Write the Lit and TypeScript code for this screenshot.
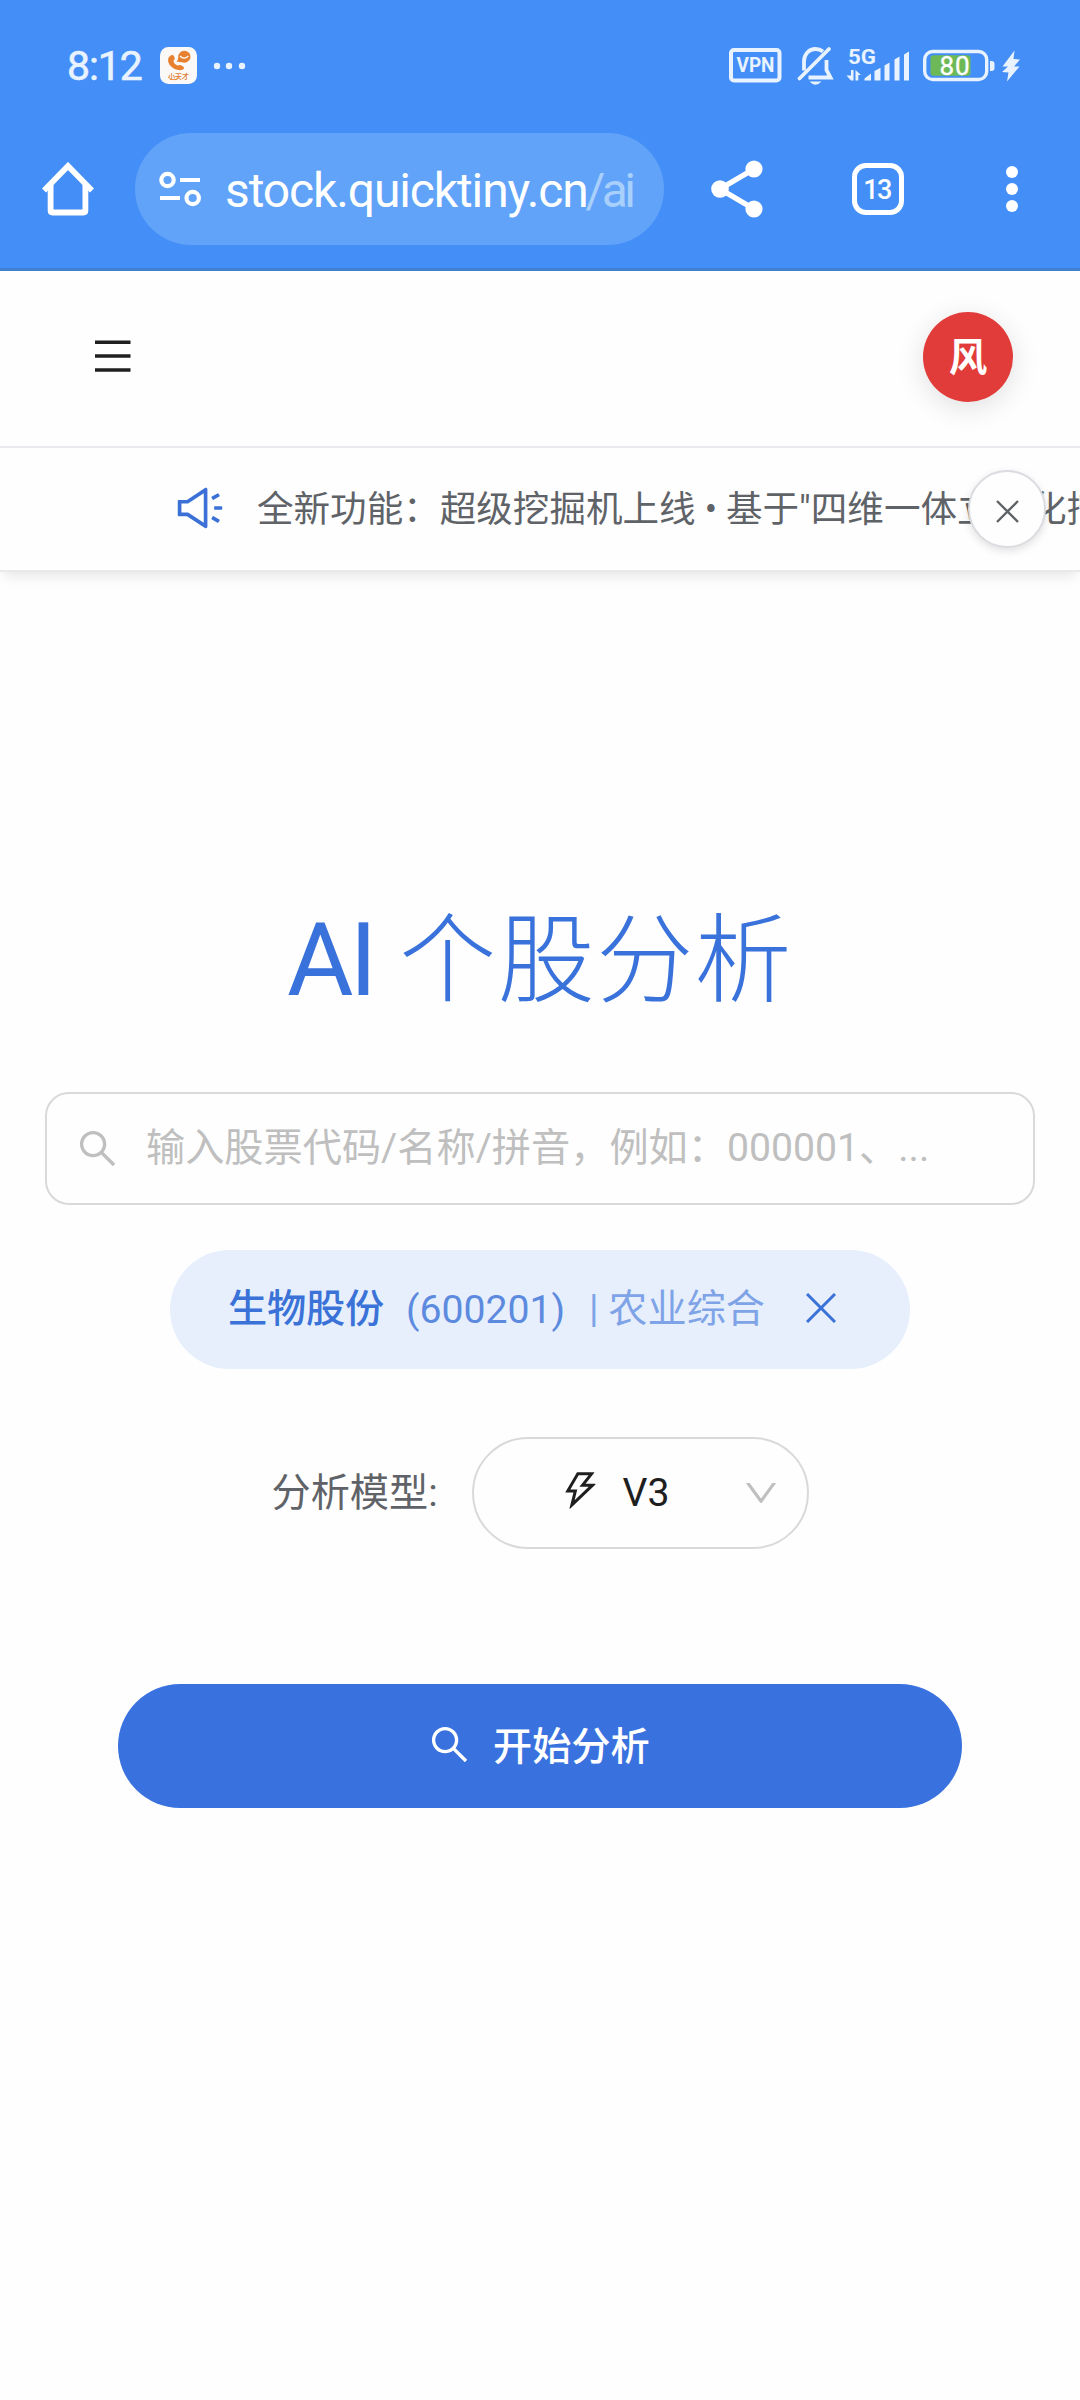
import { LitElement, html, css } from "lit";
import { customElement } from "lit/decorators.js";

const SEARCH =
  "M909.6 854.5L649.9 594.8C690.2 542.7 712 479 712 412c0-80.2-31.3-155.4-87.9-212.1-56.6-56.7-132-87.9-212.1-87.9s-155.5 31.3-212.1 87.9C143.2 256.5 112 331.8 112 412c0 80.1 31.3 155.5 87.9 212.1C256.5 680.8 331.8 712 412 712c67 0 130.6-21.8 182.7-62l259.7 259.6a8.2 8.2 0 0 0 11.6 0l43.6-43.5a8.2 8.2 0 0 0 0-11.6zM570.4 570.4C528 612.7 471.8 636 412 636s-116-23.3-158.4-65.6C211.3 528 188 471.8 188 412s23.3-116.1 65.6-158.4C296 211.3 352.2 188 412 188s116.1 23.2 158.4 65.6S636 352.2 636 412s-23.3 116.1-65.6 158.4z";
const SOUND =
  "M625.9 115c-5.9 0-11.9 1.6-17.4 5.3L254 352H90c-8.8 0-16 7.2-16 16v288c0 8.8 7.2 16 16 16h164l354.5 231.7c5.5 3.6 11.6 5.3 17.4 5.3 16.7 0 32.1-13.3 32.1-32.1V147.1c0-18.8-15.4-32.1-32.1-32.1zM586 803L293.4 611.7l-18-11.7H146V424h129.4l17.9-11.7L586 221v582zm348-327H806c-8.8 0-16 7.2-16 16v40c0 8.8 7.2 16 16 16h128c8.8 0 16-7.2 16-16v-40c0-8.8-7.2-16-16-16zm-41.9 261.8l-110.3-63.7a15.9 15.9 0 0 0-21.7 5.9l-19.9 34.5c-4.4 7.6-1.8 17.4 5.8 21.8L856.3 800a15.9 15.9 0 0 0 21.7-5.9l19.9-34.5c4.4-7.6 1.7-17.4-5.8-21.8zM760 344a15.9 15.9 0 0 0 21.7 5.9L892 286.2c7.6-4.4 10.2-14.2 5.8-21.8L878 230a15.9 15.9 0 0 0-21.7-5.9L746 287.8a15.99 15.99 0 0 0-5.8 21.8L760 344z";
const BOLT =
  "M848 359.3H627.7L825.8 109c4.1-5.3.4-13-6.3-13H436c-2.8 0-5.5 1.5-6.9 4L170 547.5c-3.1 5.3.7 12 6.9 12h174.4l-89.4 357.6c-1.9 7.8 7.5 13.3 13.3 7.7L853.5 373c5.2-4.9 1.7-13.7-5.5-13.7zM378.2 732.5l60.3-241H281.1l189.6-327.4h224.6L487 427.4h211L378.2 732.5z";
const DOWN =
  "M884 256h-75c-5.1 0-9.9 2.5-12.9 6.6L512 654.2 227.9 262.6c-3-4.1-7.8-6.6-12.9-6.6h-75c-6.5 0-10.3 7.4-6.5 12.7l352.6 486.1c12.8 17.6 39 17.6 51.7 0l352.6-486.1c3.9-5.3.1-12.7-6.4-12.7z";

const glyph = (d: string, size: number) => html`<svg
  width=${size}
  height=${size}
  viewBox="0 0 1024 1024"
  fill="currentColor"
>
  <path d=${d}></path>
</svg>`;

const cross = (size: number, stroke: number) => html`<svg
  width=${size}
  height=${size}
  viewBox="0 0 ${size} ${size}"
  fill="none"
  stroke="currentColor"
  stroke-width=${stroke}
>
  <path d="M1 1L${size - 1} ${size - 1}M${size - 1} 1L1 ${size - 1}"></path>
</svg>`;

@customElement("status-bar")
class StatusBar extends LitElement {
  static styles = css`
    :host {
      display: flex;
      align-items: center;
      height: 110px;
      box-sizing: border-box;
      padding: 22px 60px 0 67px;
      color: #e9f3ff;
      font-family: Roboto, "Noto Sans CJK SC", sans-serif;
    }
    svg {
      display: block;
      flex: none;
      overflow: visible;
    }
    .time {
      width: 93px;
      font-size: 41px;
      line-height: 44px;
      font-weight: 400;
      letter-spacing: -1.1px;
      -webkit-text-stroke: 0.6px #e9f3ff;
      white-space: nowrap;
    }
    .more {
      margin-left: 16px;
    }
    .right {
      margin-left: auto;
      display: flex;
      align-items: center;
    }
    .bell {
      margin-left: 15px;
    }
    .signal {
      margin-left: 12px;
    }
    .battery {
      margin-left: 13px;
    }
    .charge {
      margin-left: 7px;
    }
  `;
  render() {
    return html`
      <span class="time">8:12</span>
      <svg width="37" height="38" viewBox="0 0 37 38">
        <rect width="37" height="37" rx="8.5" fill="#fbf9f7"></rect>
        <path
          d="M11.2 8.200c-4.400 2-3.600 7.300-.8 10.600 3 3.600 8.200 5.400 12.600 3.800 1.300-.6 1.100-2.300.2-3.100l-2.300-1.300c-1.300-.6-2.200.5-3.200.4-2.200-.5-4-2.500-4.200-4.500 0-1.200 1.500-1.500 1.300-2.900l-.9-2.200c-.5-1-1.600-1.300-2.700-.8z"
          fill="#e8812f"
        ></path>
        <path d="M16.500 14.500q1.700-1.500 1.700-4a6.200 6 0 1 1 3.800 4.800q-2.500 0-5.500-.8z" fill="#e8812f"></path>
        <path d="M20 9q4 4.200 8.400 0" stroke="#fff" stroke-width="1.100" fill="none"></path>
        <text x="8" y="31.500" font-size="7.300" font-weight="500" textLength="21" fill="#e07a32">小天才</text>
        <path d="M8.500 30q3.500 4.500 10 1.500" stroke="#e8812f" stroke-width=".9" fill="none"></path>
      </svg>
      <svg class="more" width="34" height="8" viewBox="0 0 34 8" fill="currentColor">
        <circle cx="4" cy="4" r="3.200"></circle><circle cx="16" cy="4" r="3.200"></circle><circle cx="29" cy="4" r="3.200"></circle>
      </svg>
      <div class="right">
        <svg width="53" height="36" viewBox="0 0 53 36">
          <rect x="2" y="2" width="48.500" height="30.500" rx="3" fill="none" stroke="currentColor" stroke-width="4"></rect>
          <text x="7.500" y="24.300" font-size="19.500" font-weight="700" textLength="38" lengthAdjust="spacingAndGlyphs" fill="currentColor">VPN</text>
        </svg>
        <svg class="bell" width="37" height="40" viewBox="0 0 37 40" fill="none" stroke="currentColor" stroke-width="3.800">
          <path d="M2.500 32.500L32 3" stroke-linecap="round"></path>
          <path d="M7 24.500V15.500C7 8 12 3 18.500 3C21.500 3 24 4 26 5.600"></path>
          <path d="M29.500 14V24L33.500 31.500H11.500"></path>
          <path d="M12.500 35.500q6 6.500 12 0z" fill="currentColor" stroke="none"></path>
        </svg>
        <svg class="signal" width="64" height="38" viewBox="0 0 64 38" fill="currentColor">
          <text x="2" y="16.500" font-size="21" font-weight="700" textLength="28" lengthAdjust="spacingAndGlyphs">5G</text>
          <path d="M5 23h2.500v10.500H5L.5 28.500H5zM9.500 33.500V23l5.500 5h-2.700v5.500z"></path>
          <path d="M18.500 33.500v-2l6.500-5v7zM28.500 33.500V24l6-3.200V33.500zM38.500 33.500V18.500l5-3V33.500zM48.500 33.500V12.500l5-3V33.500zM58 33.500V7.500l5-3V33.500z"></path>
        </svg>
        <svg class="battery" width="72" height="34" viewBox="0 0 72 34">
          <rect x="1.700" y="2.500" width="62" height="28" rx="8" fill="none" stroke="currentColor" stroke-width="3.400"></rect>
          <rect x="7.500" y="6.300" width="40" height="20.500" rx="3" fill="#6db957"></rect>
          <path d="M67 12h1.500q3 0 3 3v4q0 3-3 3H67z" fill="currentColor"></path>
          <text x="16.500" y="26.200" font-size="26" font-weight="400" textLength="30" fill="#fff" stroke="#fff" stroke-width=".4">80</text>
        </svg>
        <svg class="charge" width="18" height="32" viewBox="0 0 18 32" fill="currentColor">
          <path d="M12.500 0.500L.5 16.500H6L0 22l6.500.5L5 31.500L17.500 16.500H12L18 9.500L11.500 9z"></path>
        </svg>
      </div>
    `;
  }
}

@customElement("browser-bar")
class BrowserBar extends LitElement {
  static styles = css`
    :host {
      display: flex;
      align-items: center;
      height: 161px;
      box-sizing: border-box;
      padding: 0 62px 0 42px;
      border-bottom: 3px solid #417fcf;
      color: #fff;
      font-family: Roboto, sans-serif;
    }
    svg {
      display: block;
      flex: none;
    }
    .url {
      display: flex;
      align-items: center;
      width: 529px;
      height: 112px;
      box-sizing: border-box;
      margin-left: 41px;
      padding-left: 24px;
      border-radius: 56px;
      background: #60a3f8;
    }
    .address {
      margin-left: 23px;
      padding-top: 3px;
      font-size: 48px;
      line-height: 56px;
      letter-spacing: -1.12px;
      white-space: nowrap;
    }
    .path {
      margin-left: -2px;
      color: #a9cffc;
      letter-spacing: -3.6px;
    }
    .share {
      margin-left: 47px;
    }
    .tabs {
      margin-left: 89px;
      display: flex;
      align-items: center;
      justify-content: center;
      width: 52px;
      height: 52px;
      box-sizing: border-box;
      padding: 2px 2px 0 0;
      border: 5.5px solid #fff;
      border-radius: 14px;
      font-size: 27px;
      font-weight: 500;
      letter-spacing: -1.6px;
    }
    .menu {
      margin-left: auto;
    }
  `;
  render() {
    return html`
      <svg width="52" height="54" viewBox="0 0 52 54" fill="none" stroke="currentColor" stroke-width="5.800">
        <path d="M2 28.500L26 4L50 28.500"></path>
        <path d="M8.600 22V48.500q0 2 2 2H41.400q2 0 2-2V22"></path>
      </svg>
      <div class="url">
        <svg width="43" height="38" viewBox="0 0 43 38" fill="none" stroke="currentColor" stroke-width="4.200">
          <circle cx="8.500" cy="10" r="6.200"></circle>
          <path d="M21 10H41M1 28H21"></path>
          <circle cx="33.700" cy="28" r="6.200"></circle>
        </svg>
        <span class="address">stock.quicktiny.cn<span class="path">/ai</span></span>
      </div>
      <svg class="share" width="52" height="58" viewBox="0 0 52 58" fill="currentColor">
        <path d="M43 9L9 29L43 49" fill="none" stroke="currentColor" stroke-width="5.500"></path>
        <circle cx="9" cy="29" r="8.800"></circle><circle cx="43" cy="9" r="8.600"></circle><circle cx="43" cy="49" r="8.600"></circle>
      </svg>
      <div class="tabs">13</div>
      <svg class="menu" width="12" height="46" viewBox="0 0 12 46" fill="currentColor">
        <circle cx="6" cy="6" r="6"></circle><circle cx="6" cy="23" r="6"></circle><circle cx="6" cy="40" r="6"></circle>
      </svg>
    `;
  }
}

@customElement("app-root")
class AppRoot extends LitElement {
  static styles = css`
    :host {
      display: block;
      width: 1080px;
      height: 2400px;
      overflow: hidden;
      background: #fefefe;
      color: #5f6368;
      font-family: Roboto, "Noto Sans CJK SC", sans-serif;
      font-size: 39.2px;
    }
    svg {
      display: block;
      flex: none;
    }
    .chrome {
      background: #448ef7;
    }
    .header {
      display: flex;
      align-items: center;
      justify-content: space-between;
      height: 177px;
      box-sizing: border-box;
      padding: 0 67px 4px 95px;
      border-bottom: 2px solid #e8eaed;
    }
    .burger {
      margin-bottom: 2px;
    }
    .avatar {
      display: flex;
      align-items: center;
      justify-content: center;
      width: 90px;
      height: 90px;
      box-sizing: border-box;
      padding-top: 2px;
      border-radius: 50%;
      background: #e13c39;
      box-shadow: 0 6px 28px rgba(0, 0, 0, 0.12);
      color: #fff;
      font-size: 38.5px;
      font-weight: 700;
      line-height: 44px;
    }
    .notice {
      position: relative;
      display: flex;
      align-items: center;
      height: 124px;
      box-sizing: border-box;
      padding-left: 174px;
      border-bottom: 2px solid #e9e9e9;
      box-shadow: 0 8px 12px -4px rgba(0, 0, 0, 0.1);
    }
    .sound {
      color: #3b71d6;
      margin-bottom: 2px;
    }
    .ticker {
      flex: 1;
      min-width: 0;
      margin-left: 31px;
      padding-top: 1px;
      overflow: hidden;
      white-space: nowrap;
      font-size: 36.55px;
      line-height: 52px;
    }
    .dismiss {
      position: absolute;
      left: 968px;
      top: 22px;
      display: flex;
      align-items: center;
      justify-content: center;
      width: 78px;
      height: 78px;
      box-sizing: border-box;
      padding-top: 5px;
      border: 2px solid #dadce0;
      border-radius: 50%;
      background: #fefefe;
      box-shadow: 0 3px 8px rgba(0, 0, 0, 0.12);
    }
    .main {
      display: flex;
      flex-direction: column;
      align-items: center;
    }
    .title {
      display: flex;
      align-items: flex-start;
      gap: 26px;
      margin: 321px 0 0;
      height: 134px;
      font-size: 97px;
      line-height: 134px;
      font-weight: 300;
      letter-spacing: 1.4px;
      color: #3a72dc;
      white-space: nowrap;
    }
    .latin {
      font-size: 102px;
      font-weight: 400;
      letter-spacing: -4px;
    }
    .han {
      margin-top: 1px;
    }
    .search {
      display: flex;
      align-items: center;
      width: 990px;
      height: 113px;
      box-sizing: border-box;
      margin-top: 65px;
      padding-left: 28px;
      border: 2px solid #d9d9d9;
      border-radius: 24px;
      color: #bfbfbf;
    }
    .hint {
      margin-left: 26px;
      padding-bottom: 2px;
      white-space: nowrap;
      line-height: 56px;
    }
    .chip {
      display: flex;
      align-items: center;
      width: 740px;
      height: 119px;
      box-sizing: border-box;
      margin-top: 45px;
      padding-left: 58px;
      border-radius: 60px;
      background: #e7effc;
      color: #3a72d8;
      white-space: nowrap;
    }
    .name {
      font-weight: 500;
      width: 178px;
      padding-bottom: 9px;
      letter-spacing: -0.2px;
    }
    .code {
      opacity: 0.8;
      width: 183px;
    }
    .sector {
      opacity: 0.6;
      padding-bottom: 9px;
    }
    .remove {
      margin-left: 41px;
      margin-bottom: 3px;
    }
    .model {
      display: flex;
      align-items: center;
      width: 537px;
      margin-top: 68px;
    }
    .label {
      width: 200px;
      padding-bottom: 9px;
      white-space: nowrap;
    }
    .select {
      display: flex;
      align-items: center;
      width: 337px;
      height: 112px;
      box-sizing: border-box;
      border: 2px solid #d9d9d9;
      border-radius: 56px;
      padding: 0 26px 0 84px;
      color: #1f1f1f;
    }
    .bolt {
      margin-bottom: 5px;
    }
    .version {
      margin-left: 20px;
    }
    .arrow {
      margin-left: auto;
      color: #bfbfbf;
    }
    .start {
      display: flex;
      align-items: center;
      width: 844px;
      height: 124px;
      box-sizing: border-box;
      margin-top: 135px;
      padding: 0 0 3px 309px;
      border-radius: 62px;
      background: #3972df;
      color: #fff;
      font-weight: 500;
      gap: 21px;
    }
    .action {
      padding-bottom: 4px;
    }
  `;
  render() {
    return html`
      <div class="chrome">
        <status-bar></status-bar>
        <browser-bar></browser-bar>
      </div>
      <div class="header">
        <svg class="burger" width="36" height="34" viewBox="0 0 36 34" fill="#1f1f1f">
          <path d="M0 1.500H35.500V5H0zM0 15.300H35.500V18.800H0zM0 29.200H35.500V32.700H0z"></path>
        </svg>
        <div class="avatar">风</div>
      </div>
      <div class="notice">
        <span class="sound">${glyph(SOUND, 52)}</span>
        <div class="ticker">全新功能：超级挖掘机上线 • 基于"四维一体立体化挖掘</div>
        <div class="dismiss">${cross(23, 2.4)}</div>
      </div>
      <div class="main">
        <h1 class="title"><span class="latin">AI</span><span class="han">个股分析</span></h1>
        <div class="search">
          ${glyph(SEARCH, 45)}
          <span class="hint">输入股票代码/名称/拼音，例如：000001、...</span>
        </div>
        <div class="chip">
          <span class="name">生物股份</span>
          <span class="code">(600201)</span>
          <span class="sector">| 农业综合</span>
          <span class="remove">${cross(30, 3)}</span>
        </div>
        <div class="model">
          <span class="label">分析模型:</span>
          <div class="select">
            <span class="bolt">${glyph(BOLT, 45)}</span>
            <span class="version">V3</span>
            <span class="arrow">${glyph(DOWN, 40)}</span>
          </div>
        </div>
        <div class="start">${glyph(SEARCH, 45)}<span class="action">开始分析</span></div>
      </div>
    `;
  }
}
